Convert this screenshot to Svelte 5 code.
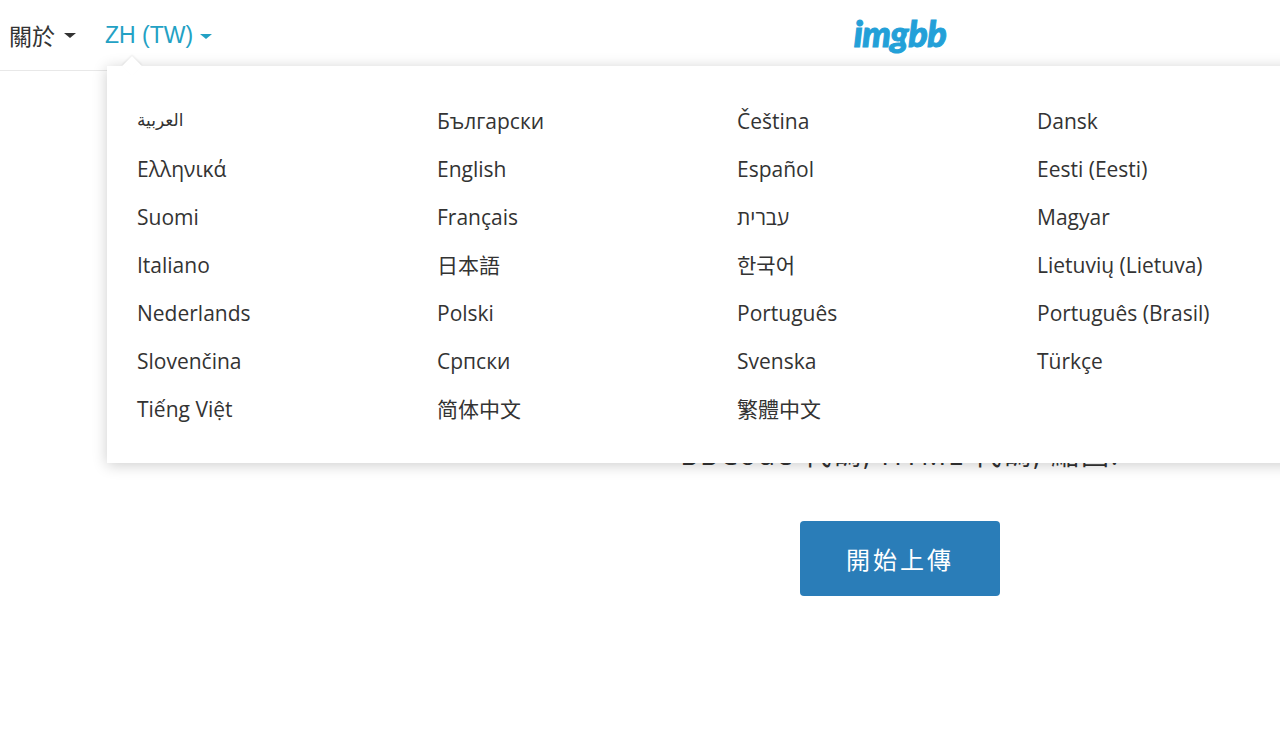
<script lang="ts">
  const languages = [
    'العربية', 'Български', 'Čeština', 'Dansk',
    'Ελληνικά', 'English', 'Español', 'Eesti (Eesti)',
    'Suomi', 'Français', 'עברית', 'Magyar',
    'Italiano', '日本語', '한국어', 'Lietuvių (Lietuva)',
    'Nederlands', 'Polski', 'Português', 'Português (Brasil)',
    'Slovenčina', 'Српски', 'Svenska', 'Türkçe',
    'Tiếng Việt', '简体中文', '繁體中文'
  ];
</script>

<header class="topbar">
  <nav class="nav">
    <button class="nav-item">關於<span class="caret"></span></button>
    <div class="lang">
      <button class="nav-item active">ZH (TW)<span class="caret"></span></button>
      <div class="menu">
        <span class="menu-arrow"></span>
        <ul class="menu-grid">
          {#each languages as name, i}
            <li class:arabic={i === 0}>{name}</li>
          {/each}
        </ul>
      </div>
    </div>
  </nav>
  <span class="logo">imgbb</span>
</header>

<main class="hero">
  <p class="limits">BBCode 代碼, HTML 代碼, 縮圖.</p>
  <button class="start">開始上傳</button>
</main>

<style>
  :global(body) {
    background: #fff;
    font-family: "Open Sans", "Noto Sans CJK TC", sans-serif;
    color: #333;
  }

  .topbar {
    position: relative;
    height: 71px;
    box-sizing: border-box;
    border-bottom: 1px solid #e8e8e8;
    display: flex;
    align-items: center;
    justify-content: center;
    padding-left: 520px;
    padding-bottom: 5px;
  }

  .nav {
    position: absolute;
    left: 9px;
    top: 0;
    height: 69px;
    display: flex;
    align-items: center;
    gap: 29px;
  }

  .nav-item {
    background: none;
    border: none;
    padding: 0;
    font-family: "Liberation Sans", "Noto Sans CJK TC", sans-serif;
    font-size: 23px;
    color: #333;
    display: flex;
    align-items: center;
    gap: 9px;
  }

  .nav-item.active {
    color: #23a1c4;
    gap: 7px;
    padding-top: 2px;
  }

  .caret {
    width: 0;
    height: 0;
    border-left: 6px solid transparent;
    border-right: 6px solid transparent;
    border-top: 5px solid currentColor;
    margin-top: 2px;
  }

  .lang {
    position: relative;
  }

  .menu {
    position: absolute;
    left: 2px;
    top: 46px;
    width: 1200px;
    height: 397px;
    box-sizing: border-box;
    background: #fff;
    box-shadow: 0 2px 14px rgba(0, 0, 0, 0.2);
    z-index: 2;
    padding: 31px 0 0 30px;
  }

  .menu-arrow {
    position: absolute;
    left: 18px;
    top: -7px;
    width: 14px;
    height: 14px;
    background: #fff;
    transform: rotate(45deg);
    box-shadow: -1px -1px 2px rgba(0, 0, 0, 0.08);
  }

  .menu-grid {
    position: relative;
    list-style: none;
    margin: 0;
    padding: 0;
    display: grid;
    grid-template-columns: repeat(4, 300px);
    grid-auto-rows: 48px;
  }

  .menu-grid li {
    font-size: 21px;
    line-height: 48px;
    color: #333;
    white-space: nowrap;
  }

  .menu-grid li.arabic {
    font-family: "DejaVu Sans", sans-serif;
    font-size: 17px;
    line-height: 46px;
  }

  .logo {
    font-family: "Lato", sans-serif;
    font-weight: 900;
    font-style: italic;
    font-size: 36px;
    letter-spacing: -0.5px;
    color: #23a0d8;
    -webkit-text-stroke: 1px #23a0d8;
  }

  .hero {
    display: flex;
    flex-direction: column;
    align-items: center;
    padding-left: 520px;
    padding-top: 366px;
  }

  .limits {
    margin: 0;
    font-size: 28px;
    line-height: 34px;
    letter-spacing: 1.8px;
    color: #333;
    white-space: nowrap;
  }

  .start {
    margin-top: 50px;
    width: 200px;
    height: 75px;
    border: none;
    border-radius: 4px;
    background: #2a7db8;
    color: #fff;
    font-family: "Noto Sans CJK TC", sans-serif;
    font-size: 24px;
    letter-spacing: 3px;
  }
</style>
